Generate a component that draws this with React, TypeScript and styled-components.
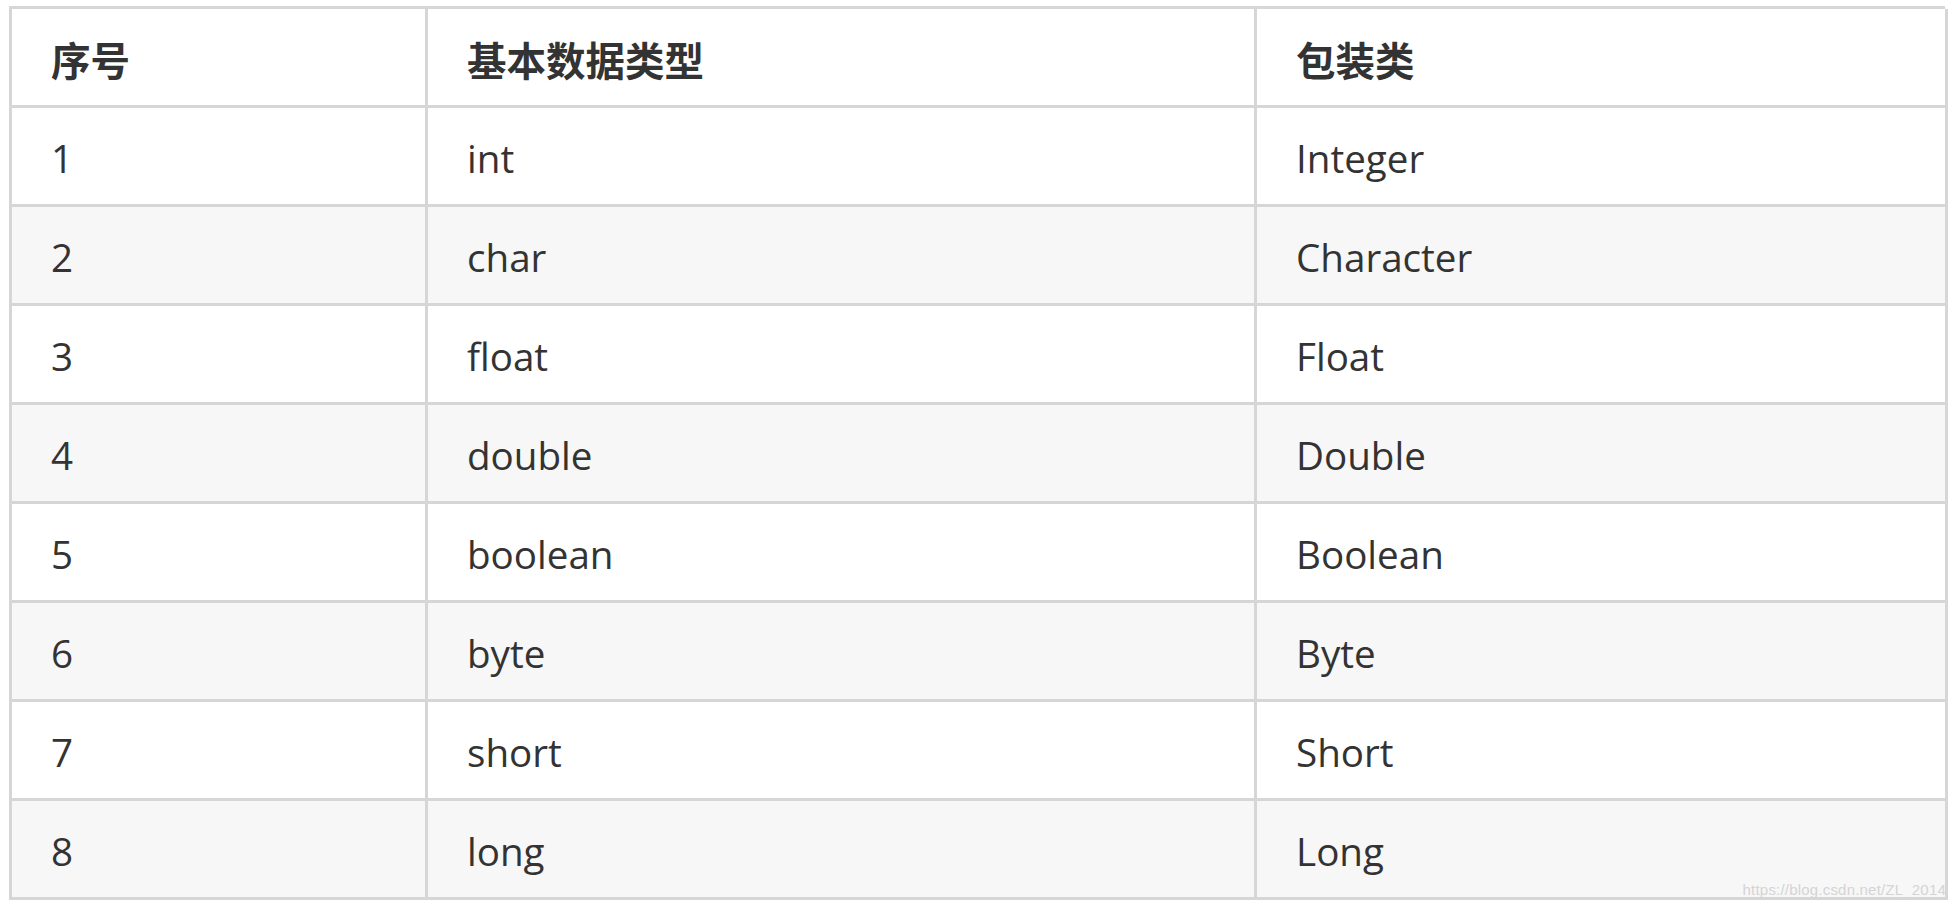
import React from "react";
import styled, { createGlobalStyle } from "styled-components";

const GlobalStyle = createGlobalStyle`
  html, body {
    margin: 0;
    padding: 0;
    background: #ffffff;
  }
  body {
    font-family: "Open Sans", "Noto Sans CJK SC", sans-serif;
  }
`;

const Page = styled.div`
  position: relative;
  width: 1956px;
  height: 911px;
  padding: 6px 0 0 9px;
  box-sizing: border-box;
  background: #ffffff;
`;

const Table = styled.div`
  display: grid;
  grid-template-columns: 416px 829px 691px;
  width: 1936px;
  border-top: 3px solid #d6d6d6;
  border-left: 3px solid #d6d6d6;
  box-sizing: border-box;
`;

const Row = styled.div<{ $striped: boolean }>`
  display: contents;
  & > div {
    background: ${(p) => (p.$striped ? "#f7f7f7" : "#ffffff")};
  }
`;

const Cell = styled.div<{ $head?: boolean }>`
  height: 99px;
  box-sizing: border-box;
  border-right: 3px solid #d6d6d6;
  border-bottom: 3px solid #d6d6d6;
  display: flex;
  align-items: center;
  padding: 3px 0 0 39px;
  font-family: "Open Sans", "Noto Sans CJK SC", sans-serif;
  font-size: ${(p) => (p.$head ? "39.5px" : "38.6px")};
  font-weight: ${(p) => (p.$head ? 700 : 400)};
  color: #333333;
  white-space: nowrap;
`;

const Watermark = styled.div`
  position: absolute;
  right: 10px;
  top: 881px;
  font-family: "Liberation Sans", Arial, sans-serif;
  font-size: 15px;
  color: #d4d4d4;
  letter-spacing: 0.2px;
`;

const rows: [string, string, string][] = [
  ["1", "int", "Integer"],
  ["2", "char", "Character"],
  ["3", "float", "Float"],
  ["4", "double", "Double"],
  ["5", "boolean", "Boolean"],
  ["6", "byte", "Byte"],
  ["7", "short", "Short"],
  ["8", "long", "Long"],
];

export default function App() {
  return (
    <>
      <GlobalStyle />
      <Page>
        <Table>
          <Row $striped={false}>
            <Cell $head>序号</Cell>
            <Cell $head>基本数据类型</Cell>
            <Cell $head>包装类</Cell>
          </Row>
          {rows.map((r, i) => (
            <Row key={r[0]} $striped={i % 2 === 1}>
              <Cell>{r[0]}</Cell>
              <Cell>{r[1]}</Cell>
              <Cell>{r[2]}</Cell>
            </Row>
          ))}
        </Table>
        <Watermark>https://blog.csdn.net/ZL_2014</Watermark>
      </Page>
    </>
  );
}
